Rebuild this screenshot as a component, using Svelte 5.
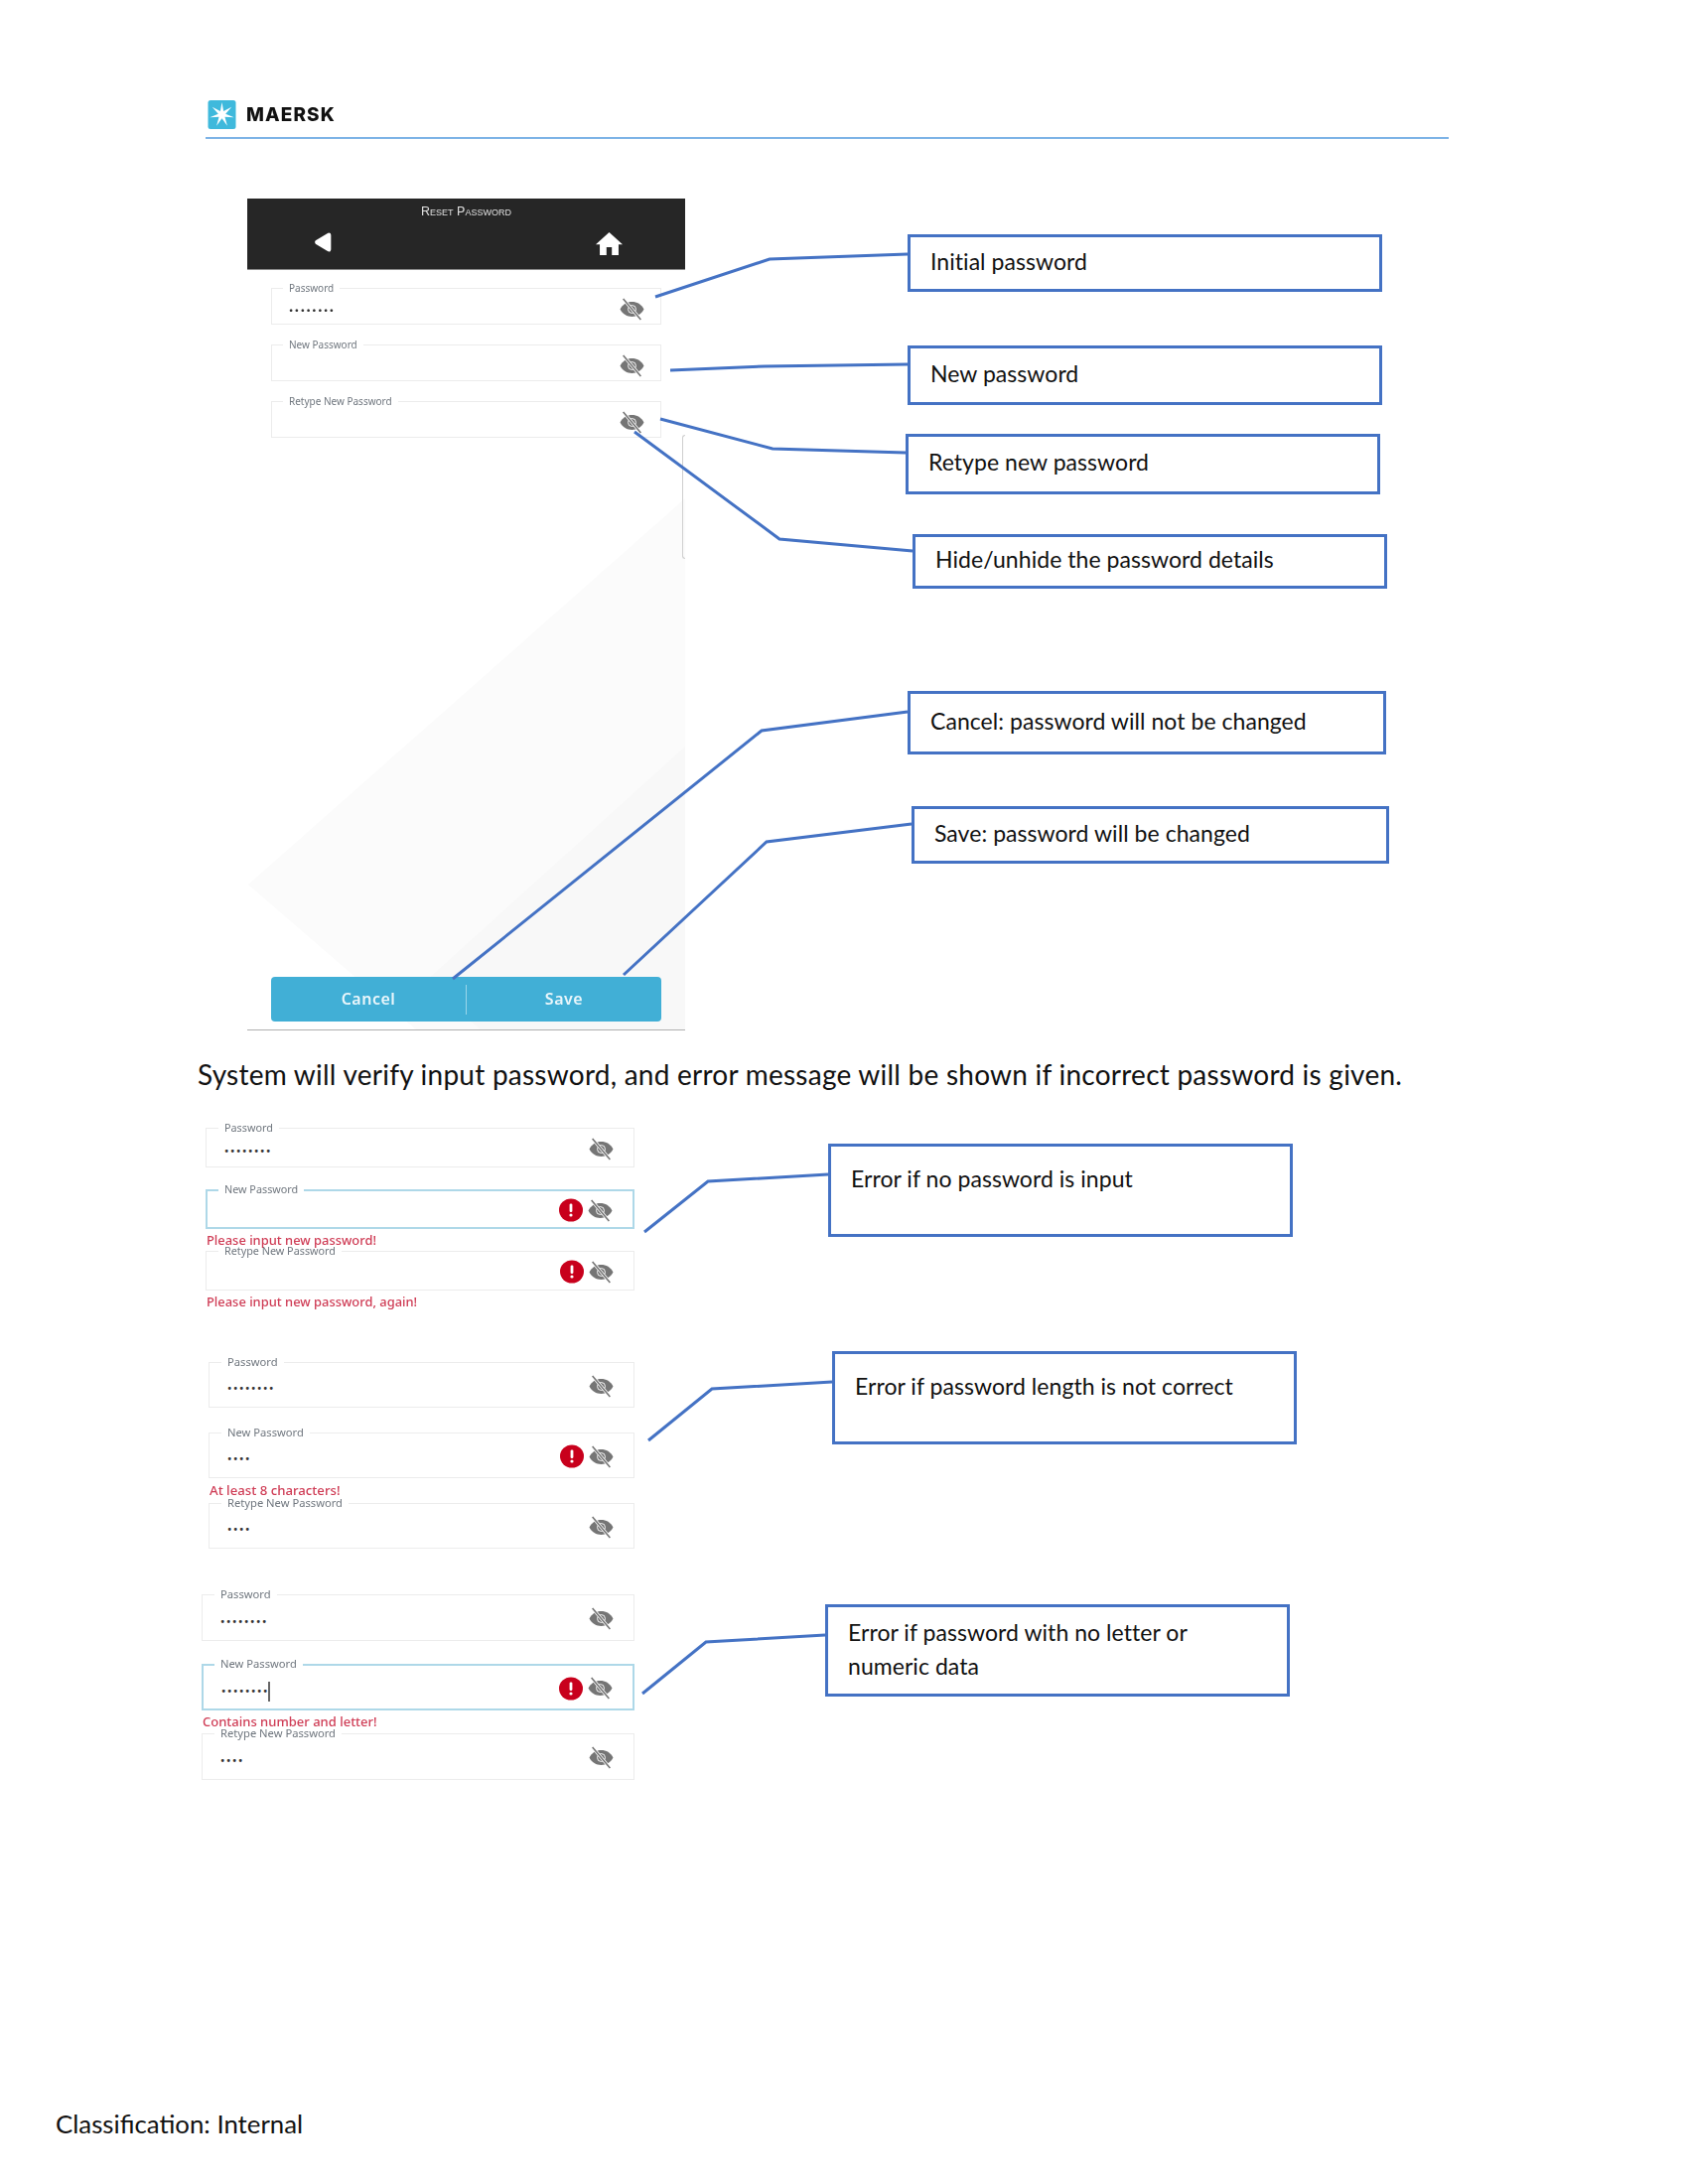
<script lang="ts">
  const callouts = [
    { text: "Initial password", x: 914, y: 236, w: 478, h: 58, line: "660,299 775,261 914,256" },
    { text: "New password", x: 914, y: 348, w: 478, h: 60, line: "675,373 770,369 914,367" },
    { text: "Retype new password", x: 912, y: 437, w: 478, h: 61, line: "665,422 778,452 912,456" },
    { text: "Hide/unhide the password details", x: 919, y: 538, w: 478, h: 55, line: "639,435 785,543 919,555" },
    { text: "Cancel: password will not be changed", x: 914, y: 696, w: 482, h: 64, line: "456,986 767,736 914,717" },
    { text: "Save: password will be changed", x: 918, y: 812, w: 481, h: 58, line: "628,982 772,848 918,830" },
    { text: "Error if no password is input", x: 834, y: 1152, w: 468, h: 94, line: "649,1241 713,1190 834,1183", top: true },
    { text: "Error if password length is not correct", x: 838, y: 1361, w: 468, h: 94, line: "653,1451 717,1399 838,1392", top: true },
    { text: "Error if password with no letter or numeric data", x: 831, y: 1616, w: 468, h: 93, line: "647,1706 711,1654 831,1647", top: true, narrow: true }
  ];

  const phoneFields = [
    { label: "Password", dots: 8 },
    { label: "New Password", dots: 0 },
    { label: "Retype New Password", dots: 0 }
  ];

  const groups = [
    {
      cls: "err-a",
      fields: [
        { label: "Password", dots: 8 },
        { label: "New Password", dots: 0, focus: true, alert: true, msg: "Please input new password!" },
        { label: "Retype New Password", dots: 0, alert: true, msg: "Please input new password, again!" }
      ]
    },
    {
      cls: "err-b",
      fields: [
        { label: "Password", dots: 8 },
        { label: "New Password", dots: 4, alert: true, msg: "At least 8 characters!" },
        { label: "Retype New Password", dots: 4 }
      ]
    },
    {
      cls: "err-c",
      fields: [
        { label: "Password", dots: 8 },
        { label: "New Password", dots: 8, focus: true, caret: true, alert: true, msg: "Contains number and letter!" },
        { label: "Retype New Password", dots: 4 }
      ]
    }
  ];

  function star(cx: number, cy: number, R: number, r: number, n = 7) {
    const pts = [];
    for (let i = 0; i < n * 2; i++) {
      const a = -Math.PI / 2 + (i * Math.PI) / n;
      const d = i % 2 ? r : R;
      pts.push(`${(cx + d * Math.cos(a)).toFixed(2)},${(cy + d * Math.sin(a)).toFixed(2)}`);
    }
    return pts.join(" ");
  }
</script>

{#snippet field(f)}
  <div class="field" class:focus={f.focus}>
    <span class="label">{f.label}</span>
    <span class="dots">{"•".repeat(f.dots)}{#if f.caret}<i class="caret"></i>{/if}</span>
    {#if f.alert}
      <svg class="alert" viewBox="0 0 24 24">
        <ellipse cx="12" cy="12" rx="12" ry="11.5" fill="#c8001c" />
        <rect x="10.6" y="5.5" width="2.8" height="8.5" rx="1.2" fill="#fff" />
        <circle cx="12" cy="17" r="1.6" fill="#fff" />
      </svg>
    {/if}
    <svg class="eye" viewBox="0 0 24 22">
      <path d="M0.5 11C5 1.5 19 1.5 23.5 11C19 20.5 5 20.5 0.5 11Z" fill="#757575" />
      <circle cx="12" cy="11" r="3.8" fill="none" stroke="#fff" stroke-width="0.9" />
      <line x1="3.5" y1="1" x2="20.5" y2="21" stroke="#fff" stroke-width="3" />
      <line x1="3.5" y1="1" x2="20.5" y2="21" stroke="#757575" stroke-width="1.5" />
    </svg>
  </div>
  {#if f.msg}
    <p class="msg">{f.msg}</p>
  {/if}
{/snippet}

<div class="page">
  <header class="brand">
    <div class="brand-row">
      <svg class="logo" viewBox="0 0 28 29">
        <rect width="28" height="29" rx="2.5" fill="#3fb9dc" />
        <polygon points={star(14, 14.5, 12.5, 3.8)} fill="#fff" />
      </svg>
      <span class="wordmark">MAERSK</span>
    </div>
  </header>

  <section class="phone">
    <div class="phone-bg">
      <svg viewBox="0 0 441 838" width="441" height="838">
        <polygon points="1,691 441,302 441,838 171,838" fill="#fbfbfb" />
        <polygon points="181,787 441,552 441,838 235,838" fill="#f8f8f8" />
      </svg>
    </div>
    <div class="appbar">
      <div class="appbar-title">Reset Password</div>
      <div class="appbar-icons">
        <svg class="back" viewBox="0 0 16 18">
          <path d="M13.5 2.5L3 9L13.5 15.5Z" fill="#fff" stroke="#fff" stroke-width="4" stroke-linejoin="round" />
        </svg>
        <svg class="home" viewBox="2 3 20 17">
          <path d="M10 20v-6h4v6h5v-8h3L12 3 2 12h3v8z" fill="#fff" />
        </svg>
      </div>
    </div>
    <div class="form phone-form">
      {#each phoneFields as f}
        {@render field(f)}
      {/each}
    </div>
    <div class="tab"></div>
    <div class="actions">
      <div class="action">Cancel</div>
      <div class="action">Save</div>
    </div>
  </section>

  <p class="lead">System will verify input password, and error message will be shown if incorrect password is given.</p>

  {#each groups as g}
    <div class="form {g.cls}">
      {#each g.fields as f}
        {@render field(f)}
      {/each}
    </div>
  {/each}

  <footer class="classification">Classification: Internal</footer>

  <!-- annotations sit on top of the whole page, in page coordinates -->
  <svg class="leaders" viewBox="0 0 1700 2200">
    {#each callouts as c}
      <polyline points={c.line} />
    {/each}
  </svg>
  {#each callouts as c}
    <div
      class="callout"
      class:top={c.top}
      class:narrow={c.narrow}
      style="left:{c.x}px;top:{c.y}px;width:{c.w}px;height:{c.h}px"
    >
      {c.text}
    </div>
  {/each}
</div>

<style>
  :global(body) {
    margin: 0;
    background: #fff;
  }

  .page {
    position: relative;
    width: 1700px;
    height: 2200px;
    display: flex;
    flex-direction: column;
    font-family: "Noto Sans", sans-serif;
    overflow: hidden;
  }

  .brand {
    margin: 101px 241px 0 207px;
    height: 37px;
    border-bottom: 2px solid #7db3e6;
  }

  .brand-row {
    display: flex;
    align-items: flex-start;
    gap: 10px;
    padding-left: 2px;
    filter: blur(0.3px);
  }

  .logo {
    width: 29px;
    height: 29px;
    flex: none;
  }

  .wordmark {
    font-family: Inter, sans-serif;
    font-weight: 800;
    font-size: 19px;
    line-height: 30px;
    letter-spacing: 1.1px;
    color: #111;
  }

  .phone {
    position: relative;
    margin: 60px 0 0 249px;
    width: 441px;
    height: 838px;
    box-sizing: border-box;
    border-bottom: 1px solid #b0b0b0;
    display: flex;
    flex-direction: column;
  }

  .phone-bg {
    position: absolute;
    inset: 0;
    line-height: 0;
    overflow: hidden;
  }

  .appbar {
    position: relative;
    height: 71px;
    background: #262626;
    border-bottom: 1px solid #8c8c8c;
    color: #fff;
    filter: blur(0.4px);
  }

  .appbar-title {
    padding-top: 5px;
    text-align: center;
    font-family: "Liberation Sans", sans-serif;
    font-variant: small-caps;
    font-size: 12.5px;
    line-height: 16px;
    color: #e0e0e0;
  }

  .appbar-icons {
    display: flex;
    justify-content: space-between;
    align-items: center;
    padding: 15px 63px 0 67px;
  }

  .back {
    width: 18px;
    height: 20px;
    margin-top: -5px;
  }

  .home {
    width: 27px;
    height: 23px;
    margin-top: -2px;
  }

  .form {
    position: relative;
    display: flex;
    flex-direction: column;
    filter: blur(0.45px);
    --eye-mt: -6px;
  }

  .phone-form {
    --h: 37px;
    --gap: 20px;
    --label: 10px;
    --pad: 17px;
    --eye-pad: 16px;
    --eye-mt: -3px;
    --dots: 11.5px;
    --dot-gap: 1.7px;
    margin: 18px 24px 0;
  }

  .err-a {
    --h: 40px;
    --gap: 22px;
    --label: 10.8px;
    --pad: 18px;
    --eye-pad: 20px;
    --dots: 12px;
    --dot-gap: 1.7px;
    --msg: 12.9px;
    position: absolute;
    top: 1136px;
    left: 207px;
    width: 432px;
  }

  .err-b {
    --h: 46px;
    --gap: 25px;
    --label: 11.2px;
    --pad: 18px;
    --eye-pad: 20px;
    --dots: 12px;
    --dot-gap: 1.7px;
    --msg: 13.2px;
    position: absolute;
    top: 1372px;
    left: 210px;
    width: 429px;
  }

  .err-c {
    --h: 47px;
    --gap: 23px;
    --label: 11.2px;
    --pad: 18px;
    --eye-pad: 20px;
    --dots: 12px;
    --dot-gap: 1.7px;
    --msg: 13px;
    position: absolute;
    top: 1606px;
    left: 203px;
    width: 436px;
  }

  .field {
    position: relative;
    flex: none;
    box-sizing: border-box;
    height: var(--h);
    margin-bottom: var(--gap);
    padding: 8px var(--eye-pad) 0 var(--pad);
    border: 1.5px solid #ececec;
    display: flex;
    align-items: center;
    gap: 5px;
    background: #fff;
  }

  .field.focus {
    border: 2px solid #aed8e8;
  }

  .label {
    position: absolute;
    top: -8px;
    left: calc(var(--pad) - 6px);
    padding: 0 6px;
    background: #fff;
    font-size: var(--label);
    line-height: 14px;
    color: #6f767e;
    white-space: nowrap;
  }

  .field.focus .label {
    top: -9px;
    left: calc(var(--pad) - 7px);
  }

  .dots {
    flex: 1;
    display: flex;
    align-items: center;
    font-family: Roboto, sans-serif;
    font-weight: 700;
    font-size: var(--dots);
    letter-spacing: var(--dot-gap);
    color: #333;
  }

  .caret {
    width: 1.5px;
    height: 20px;
    margin-left: -1px;
    background: #666;
  }

  .alert {
    width: 24px;
    height: 24px;
    flex: none;
    margin-top: -6px;
  }

  .eye {
    width: 25px;
    height: 23px;
    flex: none;
    margin-top: var(--eye-mt);
  }

  .msg {
    margin: calc(var(--gap) * -1) 0 0 1px;
    height: var(--gap);
    line-height: var(--gap);
    font-size: var(--msg);
    font-weight: 500;
    color: #cf3c55;
    white-space: nowrap;
    position: relative;
    z-index: 1;
  }

  .tab {
    position: absolute;
    top: 238px;
    right: 0;
    width: 3px;
    height: 125px;
    box-sizing: border-box;
    border: 1px solid #cfcfcf;
    border-right: none;
    border-radius: 4px 0 0 4px;
  }

  .actions {
    position: relative;
    margin: auto 24px 8px;
    height: 45px;
    border-radius: 4px;
    background: #41afd6;
    display: flex;
    align-items: center;
    filter: blur(0.3px);
  }

  .action {
    flex: 1;
    height: 30px;
    padding-bottom: 2px;
    box-sizing: border-box;
    display: flex;
    align-items: center;
    justify-content: center;
    font-weight: 600;
    font-size: 16px;
    letter-spacing: 0.5px;
    color: #e9f6fb;
  }

  .action + .action {
    border-left: 1px solid #9bd6ea;
  }

  .lead {
    margin: 27px 0 0 199px;
    font-family: Lato, sans-serif;
    font-size: 28px;
    line-height: 34px;
    letter-spacing: 0.24px;
    color: #111;
    white-space: nowrap;
  }

  .classification {
    position: absolute;
    left: 56px;
    bottom: 45px;
    font-family: Lato, sans-serif;
    font-size: 25.8px;
    line-height: 32px;
    color: #111;
  }

  .leaders {
    position: absolute;
    inset: 0;
    width: 1700px;
    height: 2200px;
    pointer-events: none;
  }

  .leaders polyline {
    fill: none;
    stroke: #4472c4;
    stroke-width: 3;
  }

  .callout {
    position: absolute;
    box-sizing: border-box;
    border: 3px solid #4472c4;
    background: #fff;
    padding: 0 20px 5px;
    display: flex;
    align-items: center;
    font-family: Lato, sans-serif;
    font-size: 23px;
    line-height: 34px;
    letter-spacing: 0.05px;
    color: #111;
  }

  .callout.top {
    align-items: flex-start;
    padding-top: 15px;
  }

  .callout.narrow {
    padding-top: 8px;
    padding-right: 90px;
  }
</style>
